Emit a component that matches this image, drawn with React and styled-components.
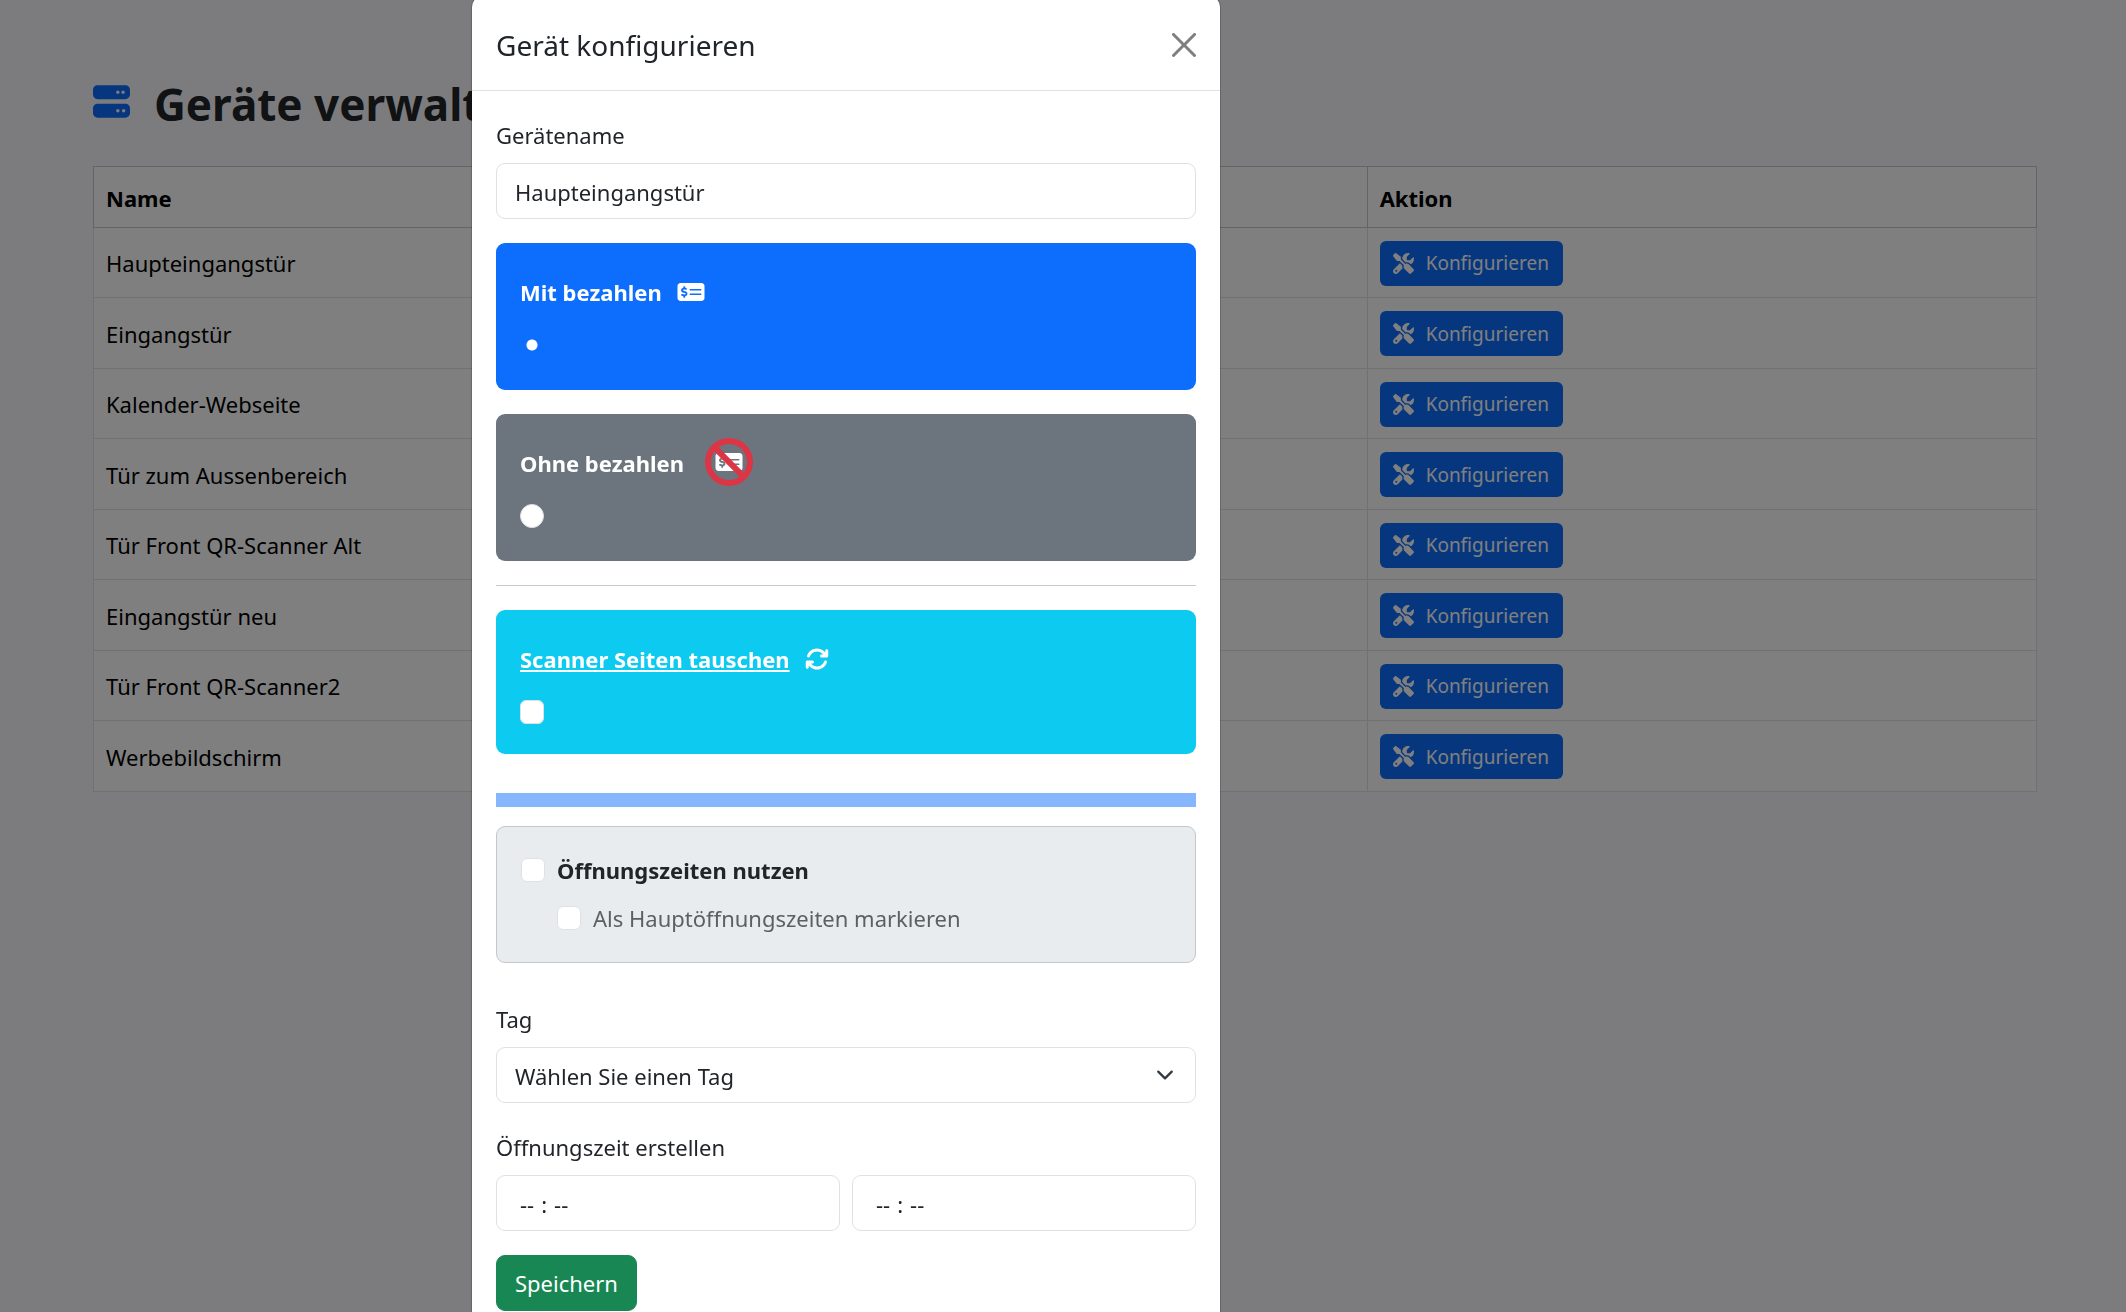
import React, { useState } from "react";
import styled, { createGlobalStyle, css } from "styled-components";
import {
  FaServer,
  FaScrewdriverWrench,
  FaMoneyCheckDollar,
  FaBan,
  FaArrowsRotate,
} from "react-icons/fa6";

const GlobalStyle = createGlobalStyle`
  *, *::before, *::after { box-sizing: border-box; }
  html, body { margin: 0; padding: 0; }
  body {
    background: #f8f8fd;
    color: #212529;
    font-family: "Noto Sans", "Open Sans", sans-serif;
    font-size: 22px;
    line-height: 36px;
    overflow: hidden;
  }
  button, input, select { font: inherit; color: inherit; margin: 0; }
`;

const Page = styled.main`
  padding: 72px 89px 0 93px;
`;

const PageTitle = styled.h1`
  display: flex;
  align-items: center;
  gap: 24px;
  margin: 0 0 30px;
  font-size: 44px;
  font-weight: 700;
  line-height: 64px;

  svg {
    width: 37px;
    height: 37px;
    margin-bottom: 6px;
    color: #0d6efd;
  }
`;

const DeviceTable = styled.table`
  width: 100%;
  border-collapse: collapse;
  table-layout: fixed;
  background: #fff;
  color: #000;
`;

const HeadCell = styled.th`
  width: ${(p) => p.$width};
  height: 61px;
  padding: 2px 12px 0;
  border: 1px solid #c4c8cc;
  text-align: left;
  font-weight: 700;
`;

const Row = styled.tr`
  height: 70px;
  &:nth-child(even) { height: 71px; }
`;

const Cell = styled.td`
  padding: 1px 12px 0;
  border: 1px solid #dee2e6;
`;

const ConfigButton = styled.button`
  display: flex;
  align-items: center;
  gap: 12px;
  height: 45px;
  padding: 0 14px 0 13px;
  border: 0;
  border-radius: 6px;
  background: #0d6efd;
  color: #fff;
  font-size: 19px;
  cursor: pointer;

  svg { width: 21px; height: 21px; }
`;

const Backdrop = styled.div`
  position: fixed;
  inset: 0;
  display: flex;
  justify-content: center;
  align-items: flex-start;
  padding-right: 434px;
  overflow: hidden;
  background: rgba(0, 0, 0, 0.5);
`;

const Dialog = styled.section`
  width: 100%;
  max-width: 750px;
  margin-top: -5px;
  border: 1px solid rgba(0, 0, 0, 0.175);
  border-radius: 12px;
  background: #fff;
  background-clip: padding-box;
`;

const DialogHeader = styled.header`
  display: flex;
  align-items: center;
  justify-content: space-between;
  height: 95px;
  padding: 3px 24px 0;
  border-bottom: 1px solid #dee2e6;
`;

const DialogTitle = styled.h2`
  margin: 0;
  font-size: 28px;
  font-weight: 400;
`;

const CloseButton = styled.button`
  display: flex;
  padding: 0;
  border: 0;
  background: none;
  color: #7f7f7f;
  cursor: pointer;

  svg { width: 24px; height: 24px; }
`;

const DialogForm = styled.form`
  padding: 24px;
`;

const Field = styled.div`
  display: flex;
  flex-direction: column;
  gap: 10px;
  margin-bottom: 24px;
`;

const FieldLabel = styled.label`
  align-self: flex-start;
  padding-top: 2px;
`;

const control = css`
  width: 100%;
  height: 56px;
  padding: 1px 18px 0;
  border: 1px solid #dee2e6;
  border-radius: 9px;
  background: #fff;
  outline: none;
`;

const TextInput = styled.input`
  ${control}
`;

const TimeInput = styled.input`
  ${control}
  padding: 1px 22px 0;

  &::-webkit-datetime-edit-text { padding: 0 6px; }

  &::-webkit-datetime-edit-ampm-field,
  &::-webkit-calendar-picker-indicator { display: none; }
`;

const TimeRow = styled.div`
  display: grid;
  grid-template-columns: 1fr 1fr;
  gap: 12px;
`;

const SelectWrap = styled.div`
  display: grid;
  align-items: center;

  select, svg { grid-area: 1 / 1; }

  svg {
    justify-self: end;
    width: 18px;
    height: 18px;
    margin-right: 22px;
    pointer-events: none;
  }
`;

const Select = styled.select`
  ${control}
  appearance: none;
`;

const OptionCard = styled.div`
  height: ${(p) => p.$height || 147}px;
  margin-bottom: 24px;
  padding: 24px;
  border-radius: 9px;
  background: ${(p) => p.$color};
  color: #fff;
`;

const OptionLabel = styled.label`
  display: flex;
  align-items: center;
  gap: 15px;
  height: 50px;
  margin-bottom: 16px;
  font-weight: 700;

  span { text-decoration: ${(p) => (p.$underline ? "underline" : "none")}; }
`;

const CheckIcon = styled(FaMoneyCheckDollar)`
  width: 28px;
  height: 24px;
`;

const ForbiddenStack = styled.i`
  display: grid;
  place-items: center;
  width: 60px;
  height: 48px;
  margin-bottom: 2px;

  svg { grid-area: 1 / 1; }
`;

const BanIcon = styled(FaBan)`
  width: 48px;
  height: 48px;
  color: #dc3545;
`;

const RotateIcon = styled(FaArrowsRotate)`
  width: 24px;
  height: 24px;
`;

const Tick = styled.input`
  display: block;
  flex: none;
  appearance: none;
  width: 24px;
  height: 24px;
  border: 1px solid #dee2e6;
  border-radius: ${(p) => (p.type === "radio" ? "50%" : "6px")};
  background: #fff;

  &:checked {
    border-color: #0d6efd;
    background: ${(p) =>
      p.type === "radio"
        ? "radial-gradient(circle, #fff 5px, #0d6efd 6px)"
        : "#0d6efd"};
  }
`;

const Rule = styled.hr`
  height: 1px;
  margin: 0 0 24px;
  border: 0;
  background: #c8c9ca;
`;

const Divider = styled.div`
  height: 14px;
  margin: 39px 0 19px;
  background: #86b7fe;
`;

const HoursBox = styled.div`
  display: grid;
  gap: 12px;
  margin-bottom: 36px;
  padding: 25px 24px 26px;
  border: 1px solid #c4c8cb;
  border-radius: 9px;
  background: #e9ecef;
`;

const HoursOption = styled.label`
  display: flex;
  align-items: center;
  gap: 12px;
  padding-left: ${(p) => (p.$nested ? 36 : 0)}px;
  font-weight: ${(p) => (p.$nested ? 400 : 700)};
  color: ${(p) => (p.$nested ? "#5c6064" : "#212529")};
`;

const SaveButton = styled.button`
  height: 56px;
  padding: 0 18px;
  border: 1px solid #198754;
  border-radius: 9px;
  background: #198754;
  color: #fff;
  cursor: pointer;
`;

const devices = [
  "Haupteingangstür",
  "Eingangstür",
  "Kalender-Webseite",
  "Tür zum Aussenbereich",
  "Tür Front QR-Scanner Alt",
  "Eingangstür neu",
  "Tür Front QR-Scanner2",
  "Werbebildschirm",
];

export default function App() {
  const [name, setName] = useState(devices[0]);
  const [payment, setPayment] = useState("mit");

  return (
    <>
      <GlobalStyle />
      <Page>
        <PageTitle>
          <FaServer />
          Geräte verwalten
        </PageTitle>
        <DeviceTable>
          <thead>
            <tr>
              <HeadCell $width="65.55%">Name</HeadCell>
              <HeadCell>Aktion</HeadCell>
            </tr>
          </thead>
          <tbody>
            {devices.map((device) => (
              <Row key={device}>
                <Cell>{device}</Cell>
                <Cell>
                  <ConfigButton type="button">
                    <FaScrewdriverWrench />
                    Konfigurieren
                  </ConfigButton>
                </Cell>
              </Row>
            ))}
          </tbody>
        </DeviceTable>
      </Page>

      <Backdrop>
        <Dialog role="dialog" aria-modal="true" aria-labelledby="dialog-title">
          <DialogHeader>
            <DialogTitle id="dialog-title">Gerät konfigurieren</DialogTitle>
            <CloseButton type="button" aria-label="Schließen">
              <svg viewBox="0 0 16 16" fill="currentColor">
                <path d="M.293.293a1 1 0 0 1 1.414 0L8 6.586 14.293.293a1 1 0 1 1 1.414 1.414L9.414 8l6.293 6.293a1 1 0 0 1-1.414 1.414L8 9.414l-6.293 6.293a1 1 0 0 1-1.414-1.414L6.586 8 .293 1.707a1 1 0 0 1 0-1.414z" />
              </svg>
            </CloseButton>
          </DialogHeader>

          <DialogForm onSubmit={(e) => e.preventDefault()}>
            <Field>
              <FieldLabel htmlFor="device-name">Gerätename</FieldLabel>
              <TextInput
                id="device-name"
                type="text"
                value={name}
                onChange={(e) => setName(e.target.value)}
              />
            </Field>

            <OptionCard $color="#0d6efd">
              <OptionLabel htmlFor="pay-with">
                <span>Mit bezahlen</span>
                <CheckIcon />
              </OptionLabel>
              <Tick
                id="pay-with"
                type="radio"
                name="payment"
                checked={payment === "mit"}
                onChange={() => setPayment("mit")}
              />
            </OptionCard>

            <OptionCard $color="#6c757d">
              <OptionLabel htmlFor="pay-without">
                <span>Ohne bezahlen</span>
                <ForbiddenStack>
                  <CheckIcon />
                  <BanIcon />
                </ForbiddenStack>
              </OptionLabel>
              <Tick
                id="pay-without"
                type="radio"
                name="payment"
                checked={payment === "ohne"}
                onChange={() => setPayment("ohne")}
              />
            </OptionCard>

            <Rule />

            <OptionCard $color="#0dcaf0" $height={144}>
              <OptionLabel htmlFor="swap-sides" $underline>
                <span>Scanner Seiten tauschen</span>
                <RotateIcon />
              </OptionLabel>
              <Tick id="swap-sides" type="checkbox" />
            </OptionCard>

            <Divider />

            <HoursBox>
              <HoursOption>
                <Tick type="checkbox" />
                Öffnungszeiten nutzen
              </HoursOption>
              <HoursOption $nested>
                <Tick type="checkbox" />
                Als Hauptöffnungszeiten markieren
              </HoursOption>
            </HoursBox>

            <Field>
              <FieldLabel htmlFor="day">Tag</FieldLabel>
              <SelectWrap>
                <Select id="day" defaultValue="">
                  <option value="">Wählen Sie einen Tag</option>
                  <option>Montag</option>
                  <option>Dienstag</option>
                  <option>Mittwoch</option>
                  <option>Donnerstag</option>
                  <option>Freitag</option>
                  <option>Samstag</option>
                  <option>Sonntag</option>
                </Select>
                <svg viewBox="0 0 16 16" fill="none">
                  <path
                    d="m2 5 6 6 6-6"
                    stroke="#343a40"
                    strokeWidth="2"
                    strokeLinecap="round"
                    strokeLinejoin="round"
                  />
                </svg>
              </SelectWrap>
            </Field>

            <Field>
              <FieldLabel htmlFor="time-from">Öffnungszeit erstellen</FieldLabel>
              <TimeRow>
                <TimeInput id="time-from" type="time" />
                <TimeInput type="time" aria-label="Schließzeit" />
              </TimeRow>
            </Field>

            <SaveButton type="submit">Speichern</SaveButton>
          </DialogForm>
        </Dialog>
      </Backdrop>
    </>
  );
}
